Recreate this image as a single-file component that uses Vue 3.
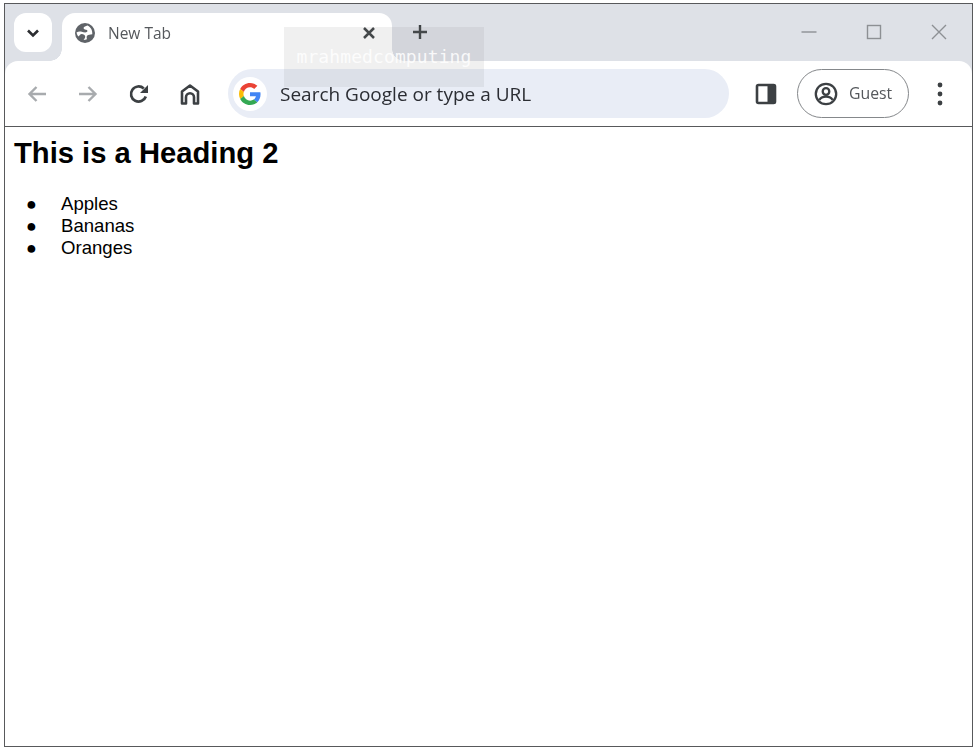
<script setup>
const fruits = ['Apples', 'Bananas', 'Oranges']
</script>

<template>
  <div class="page">
    <div class="window">
      <header class="strip">
        <button class="group-btn" aria-label="Search tabs">
          <svg width="14" height="10" viewBox="0 0 14 10"><path d="M2 2.500l5 5 5-5" fill="none" stroke="#2b2d30" stroke-width="2.600"/></svg>
        </button>
        <div class="tab">
          <svg class="globe" width="22" height="22" viewBox="0 0 22 22">
            <circle cx="11" cy="11" r="10" fill="#5f6368"/>
            <path d="M14 3.300c-1.500 1-3.500.8-4.300 2.200-.6 1.200.8 2 2.300 2.300 1.600.3 1.900 1.500.8 2.300-1.500.9-3.600 0-5-.3-1.700-.3-3.800-.3-5.300.6.300 1.500 1 3 2 4 1-.5 1.700-2.300 3.200-2.300 1.800.1 3.400 1 3.500 2.400 0 1.300-.7 2.300-1.700 3.500 1.300 0 2.400-.3 3.400-.8-.2-1.500-.5-2.800.4-3.700.9-.9 2.900-.8 5-1.200.3-3.800-1-6.800-4.800-8.900z" fill="#fff"/>
          </svg>
          <span class="tab-title">New Tab</span>
          <svg class="tab-close" width="14" height="14" viewBox="0 0 14 14"><path d="M2 2l10 10M12 2L2 12" stroke="#3c4043" stroke-width="2.500"/></svg>
        </div>
        <svg class="new-tab" width="16" height="16" viewBox="0 0 16 16"><path d="M8 1v14M1 8h14" stroke="#3c4043" stroke-width="2.400"/></svg>
        <div class="controls">
          <svg width="16" height="16" viewBox="0 0 16 16"><path d="M.5 8h15" stroke="#8d9094" stroke-width="1.400"/></svg>
          <svg width="16" height="16" viewBox="0 0 16 16"><rect x="1.500" y="1.500" width="13" height="13" fill="none" stroke="#8d9094" stroke-width="1.400"/></svg>
          <svg width="16" height="16" viewBox="0 0 16 16"><path d="M1 1l14 14M15 1L1 15" stroke="#8d9094" stroke-width="1.400"/></svg>
        </div>
      </header>

      <nav class="toolbar">
        <span class="tool">
          <svg width="20" height="18" viewBox="0 0 20 18"><path d="M19 9H2.500M9.500 2L2.500 9l7 7" fill="none" stroke="#a8abae" stroke-width="2.400"/></svg>
        </span>
        <span class="tool">
          <svg width="20" height="18" viewBox="0 0 20 18"><path d="M1 9h16.500M10.500 2l7 7-7 7" fill="none" stroke="#a8abae" stroke-width="2.400"/></svg>
        </span>
        <span class="tool">
          <svg width="22" height="22" viewBox="0 0 22 22"><path d="M17.800 13.500A7.600 7.600 0 1 1 15.800 5.500" fill="none" stroke="#3c4043" stroke-width="2.700"/><path d="M20 2v8h-8z" fill="#3c4043"/></svg>
        </span>
        <span class="tool">
          <svg width="22" height="22" viewBox="0 0 22 22"><path d="M3 20.500V8.500L11 2.500l8 6v12h-4v-6.300a4 4 0 0 0-8 0v6.300z" fill="none" stroke="#3c4043" stroke-width="2.600" stroke-linejoin="round"/></svg>
        </span>

        <div class="omnibox">
          <span class="g-badge">
            <svg width="22" height="22" viewBox="0 0 48 48">
              <path fill="#EA4335" d="M24 9.500c3.500 0 6.700 1.300 9.200 3.400l6.900-6.900C35.900 2.300 30.300 0 24 0 14.600 0 6.500 5.400 2.600 13.200l8 6.200C12.400 13.700 17.700 9.500 24 9.500z"/>
              <path fill="#4285F4" d="M47 24.500c0-1.600-.1-3.100-.4-4.500H24v9h12.900c-.6 3-2.300 5.500-4.800 7.200l7.700 6c4.500-4.200 7.200-10.300 7.200-17.700z"/>
              <path fill="#FBBC05" d="M10.500 28.600c-.5-1.400-.8-3-.8-4.600s.3-3.200.8-4.600l-8-6.200C.9 16.500 0 20.100 0 24s.9 7.500 2.600 10.800l7.900-6.200z"/>
              <path fill="#34A853" d="M24 48c6.500 0 11.900-2.100 15.900-5.800l-7.700-6c-2.200 1.400-4.900 2.300-8.100 2.300-6.300 0-11.600-4.200-13.500-9.900l-8 6.200C6.500 42.600 14.600 48 24 48z"/>
            </svg>
          </span>
          <span class="omni-text">Search Google or type a URL</span>
        </div>

        <span class="tool side">
          <svg width="22" height="22" viewBox="0 0 22 22"><rect x="2" y="2" width="18" height="18" rx="1.500" fill="#fff" stroke="#3c4043" stroke-width="2.600"/><path d="M12.500 1h6a2.500 2.500 0 0 1 2.500 2.500v15a2.500 2.500 0 0 1-2.500 2.500h-6z" fill="#3c4043"/></svg>
        </span>

        <div class="guest">
          <svg width="24" height="24" viewBox="0 0 24 24">
            <circle cx="12" cy="12" r="10.200" fill="none" stroke="#3c4043" stroke-width="2.300"/>
            <circle cx="12" cy="9.500" r="3.300" fill="none" stroke="#3c4043" stroke-width="2.300"/>
            <path d="M5.500 18c1-2.300 3.500-3.300 6.500-3.300s5.500 1 6.500 3.300" fill="none" stroke="#3c4043" stroke-width="2.300"/>
          </svg>
          <span class="guest-text">Guest</span>
        </div>

        <span class="tool menu">
          <svg width="6" height="24" viewBox="0 0 6 24"><circle cx="3" cy="3" r="2.400" fill="#3c4043"/><circle cx="3" cy="12" r="2.400" fill="#3c4043"/><circle cx="3" cy="21" r="2.400" fill="#3c4043"/></svg>
        </span>
      </nav>

      <main class="content">
        <h2>This is a Heading 2</h2>
        <ul>
          <li v-for="fruit in fruits" :key="fruit"><span class="dot">●</span><span class="fruit">{{ fruit }}</span></li>
        </ul>
      </main>
    </div>
    <div class="watermark">mrahmedcomputing</div>
  </div>
</template>

<style>
html, body { margin: 0; background: #fff; }
</style>

<style scoped>
.page {
  position: relative;
  width: 977px;
  height: 750px;
  padding: 3px 4px;
  box-sizing: border-box;
  background: #fff;
  overflow: hidden;
}
.window {
  display: flex;
  flex-direction: column;
  width: 969px;
  height: 744px;
  box-sizing: border-box;
  border: 1px solid #58595b;
  background: #dee1e7;
}
.strip {
  display: flex;
  align-items: flex-start;
  height: 57px;
  flex: none;
  padding: 9px 0 0 9px;
  box-sizing: border-box;
  filter: blur(0.35px);
}
.group-btn {
  display: flex;
  align-items: center;
  justify-content: center;
  width: 38px;
  height: 39px;
  padding: 0;
  border: 0;
  border-radius: 12px;
  background: #fff;
}
.tab {
  position: relative;
  display: flex;
  align-items: center;
  width: 330px;
  height: 48px;
  margin-left: 10px;
  padding: 0 0 9px 12px;
  box-sizing: border-box;
  border-radius: 13px 13px 0 0;
  background: #fff;
}
.tab::before, .tab::after {
  content: "";
  position: absolute;
  bottom: 0;
  width: 12px;
  height: 12px;
}
.tab::before {
  left: -12px;
  background: radial-gradient(circle at 0 0, transparent 11.500px, #fff 12px);
}
.tab::after {
  right: -12px;
  background: radial-gradient(circle at 100% 0, transparent 11.500px, #fff 12px);
}
.tab-title {
  margin-left: 12px;
  font: 15.500px "Open Sans", sans-serif;
  color: #55585c;
}
.tab-close { margin-left: auto; margin-right: 16px; }
.new-tab { margin: 11px 0 0 20px; }
.controls {
  display: flex;
  align-items: center;
  gap: 49px;
  margin: 11px 25px 0 auto;
}
.toolbar {
  display: flex;
  align-items: center;
  height: 65px;
  flex: none;
  padding-left: 6px;
  box-sizing: border-box;
  border-radius: 13px 13px 0 0;
  background: #fff;
  filter: blur(0.35px);
}
.tool {
  display: flex;
  align-items: center;
  justify-content: center;
  width: 51px;
  height: 40px;
  flex: none;
}
.omnibox {
  display: flex;
  align-items: center;
  width: 501px;
  height: 49px;
  margin-left: 13px;
  padding-left: 5px;
  box-sizing: border-box;
  border-radius: 25px;
  background: #e9edf6;
}
.g-badge {
  display: flex;
  align-items: center;
  justify-content: center;
  width: 34px;
  height: 34px;
  border-radius: 50%;
  background: #fff;
}
.omni-text {
  margin-left: 13px;
  font: 19px "Open Sans", sans-serif;
  color: #2b2d33;
}
.side { width: 40px; margin-left: 17px; }
.guest {
  display: flex;
  align-items: center;
  width: 112px;
  height: 49px;
  margin-left: 11px;
  padding-left: 16px;
  box-sizing: border-box;
  border: 1px solid #85888b;
  border-radius: 25px;
}
.guest-text {
  margin-left: 11px;
  margin-top: -1px;
  font: 15.800px "Open Sans", sans-serif;
  color: #55585c;
}
.menu { width: 40px; margin-left: 11px; }
.content {
  flex: 1;
  min-height: 0;
  border-top: 1px solid #58595b;
  background: #fff;
  padding: 9px 0 0 9px;
  font-family: "Liberation Sans", Arial, sans-serif;
  color: #000;
}
h2 {
  margin: 0;
  font-size: 29.200px;
  line-height: 34px;
  font-weight: 700;
}
ul {
  margin: 23px 0 0;
  padding: 0;
  list-style: none;
}
li {
  display: flex;
  line-height: 22px;
}
.dot {
  width: 47px;
  padding-left: 12px;
  box-sizing: border-box;
  flex: none;
  font-size: 18px;
}
.fruit { font-size: 18.600px; }
.watermark {
  position: absolute;
  left: 284px;
  top: 27px;
  width: 200px;
  height: 60px;
  padding-top: 19px;
  box-sizing: border-box;
  text-align: center;
  background: rgba(128, 128, 128, 0.12);
  color: rgba(255, 255, 255, 0.85);
  font: 18px/22px "DejaVu Sans Mono", monospace;
  letter-spacing: 0.100px;
}
</style>
